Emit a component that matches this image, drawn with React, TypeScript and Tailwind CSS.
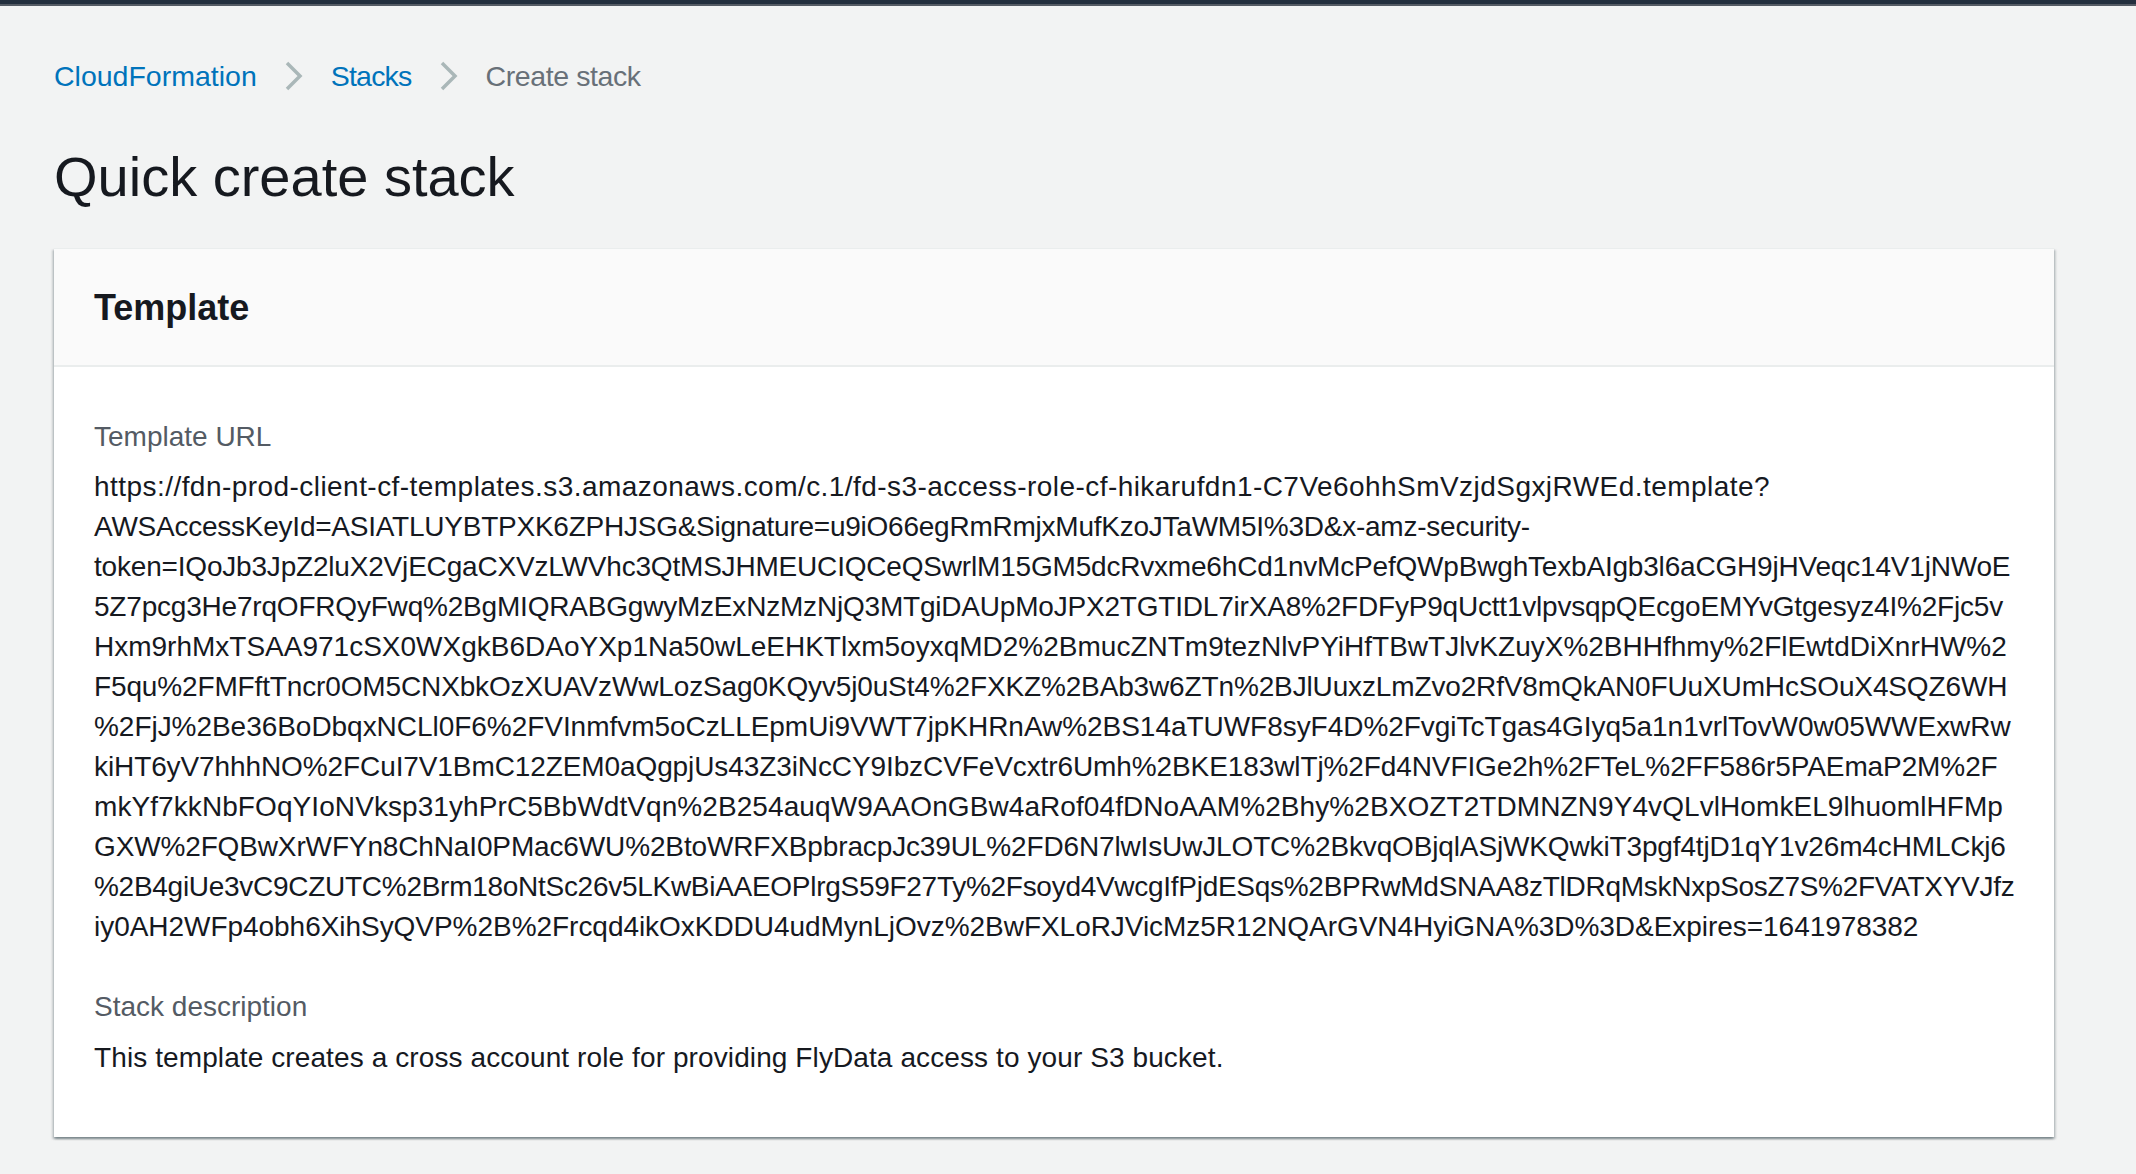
import React from "react";

// per-line tracking keeps the right edge of each wrapped line where the original breaks it
const URL_LINES = [
  { text: "https://fdn-prod-client-cf-templates.s3.amazonaws.com/c.1/fd-s3-access-role-cf-hikarufdn1-C7Ve6ohhSmVzjdSgxjRWEd.template?", cls: "tracking-[0.45px]" },
  { text: "AWSAccessKeyId=ASIATLUYBTPXK6ZPHJSG&Signature=u9iO66egRmRmjxMufKzoJTaWM5I%3D&x-amz-security-", cls: "tracking-[-0.24px]" },
  { text: "token=IQoJb3JpZ2luX2VjECgaCXVzLWVhc3QtMSJHMEUCIQCeQSwrlM15GM5dcRvxme6hCd1nvMcPefQWpBwghTexbAIgb3l6aCGH9jHVeqc14V1jNWoE", cls: "tracking-[-0.19px]" },
  { text: "5Z7pcg3He7rqOFRQyFwq%2BgMIQRABGgwyMzExNzMzNjQ3MTgiDAUpMoJPX2TGTIDL7irXA8%2FDFyP9qUctt1vlpvsqpQEcgoEMYvGtgesyz4I%2Fjc5v", cls: "tracking-[-0.2px]" },
  { text: "Hxm9rhMxTSAA971cSX0WXgkB6DAoYXp1Na50wLeEHKTlxm5oyxqMD2%2BmucZNTm9tezNlvPYiHfTBwTJlvKZuyX%2BHHfhmy%2FlEwtdDiXnrHW%2", cls: "tracking-[0px]" },
  { text: "F5qu%2FMFftTncr0OM5CNXbkOzXUAVzWwLozSag0KQyv5j0uSt4%2FXKZ%2BAb3w6ZTn%2BJlUuxzLmZvo2RfV8mQkAN0FUuXUmHcSOuX4SQZ6WH", cls: "tracking-[-0.14px]" },
  { text: "%2FjJ%2Be36BoDbqxNCLl0F6%2FVInmfvm5oCzLLEpmUi9VWT7jpKHRnAw%2BS14aTUWF8syF4D%2FvgiTcTgas4GIyq5a1n1vrlTovW0w05WWExwRw", cls: "tracking-[-0.04px]" },
  { text: "kiHT6yV7hhhNO%2FCuI7V1BmC12ZEM0aQgpjUs43Z3iNcCY9IbzCVFeVcxtr6Umh%2BKE183wlTj%2Fd4NVFIGe2h%2FTeL%2FF586r5PAEmaP2M%2F", cls: "tracking-[-0.1px]" },
  { text: "mkYf7kkNbFOqYIoNVksp31yhPrC5BbWdtVqn%2B254auqW9AAOnGBw4aRof04fDNoAAM%2Bhy%2BXOZT2TDMNZN9Y4vQLvlHomkEL9lhuomlHFMp", cls: "tracking-[0.08px]" },
  { text: "GXW%2FQBwXrWFYn8ChNaI0PMac6WU%2BtoWRFXBpbracpJc39UL%2FD6N7lwIsUwJLOTC%2BkvqOBjqlASjWKQwkiT3pgf4tjD1qY1v26m4cHMLCkj6", cls: "tracking-[-0.14px]" },
  { text: "%2B4giUe3vC9CZUTC%2Brm18oNtSc26v5LKwBiAAEOPlrgS59F27Ty%2Fsoyd4VwcgIfPjdESqs%2BPRwMdSNAA8zTlDRqMskNxpSosZ7S%2FVATXYVJfz", cls: "tracking-[-0.28px]" },
  { text: "iy0AH2WFp4obh6XihSyQVP%2B%2Frcqd4ikOxKDDU4udMynLjOvz%2BwFXLoRJVicMz5R12NQArGVN4HyiGNA%3D%3D&Expires=1641978382", cls: "tracking-[-0.04px]" },
];

function Chevron() {
  return (
    <svg width="18" height="30" viewBox="0 0 18 30" className="shrink-0">
      <polyline points="2,2 15,15 2,28" fill="none" stroke="#aab7b8" strokeWidth="3.5" />
    </svg>
  );
}

export default function App() {
  return (
    <div className="min-h-screen bg-[#f2f3f3] text-[#16191f] font-['Liberation_Sans',Arial,sans-serif]">
      <div className="h-[4px] bg-[#232f3e]" />
      <div className="h-[2px] bg-[#545b64]" />

      <div className="pl-[54px] pr-[82px]">
        {/* Breadcrumbs */}
        <nav className="flex items-center gap-[28px] pt-[50px] text-[28.5px] leading-[40px]">
          <span className="text-[#0073bb]">CloudFormation</span>
          <Chevron />
          <span className="text-[#0073bb] tracking-[-0.8px]">Stacks</span>
          <Chevron />
          <span className="text-[#687078] tracking-[-0.4px]">Create stack</span>
        </nav>

        <h1 className="mt-[45px] text-[56px] leading-[72px] font-normal">Quick create stack</h1>

        {/* Template container */}
        <section className="mt-[35px] bg-white border-t border-[#eaeded] shadow-[0_2px_2px_0_rgba(0,28,36,0.3),2px_2px_2px_0_rgba(0,28,36,0.15),-2px_2px_2px_0_rgba(0,28,36,0.15)]">
          <div className="bg-[#fafafa] border-b-2 border-[#eaeded] px-10 pt-[37px] pb-[35px]">
            <h2 className="text-[36px] leading-[44px] font-bold">Template</h2>
          </div>

          <div className="px-10 pt-[50px] pb-[59px] text-[28px] leading-[40px]">
            <div className="text-[#545b64] mb-[10px]">Template URL</div>
            <div className="whitespace-nowrap">
              {URL_LINES.map((line, i) => (
                <div key={i} className={line.cls}>
                  {line.text}
                </div>
              ))}
            </div>

            <div className="text-[#545b64] mt-[40px] mb-[11px]">Stack description</div>
            <div className="tracking-[0.1px]">
              This template creates a cross account role for providing FlyData access to your S3 bucket.
            </div>
          </div>
        </section>
      </div>
    </div>
  );
}
